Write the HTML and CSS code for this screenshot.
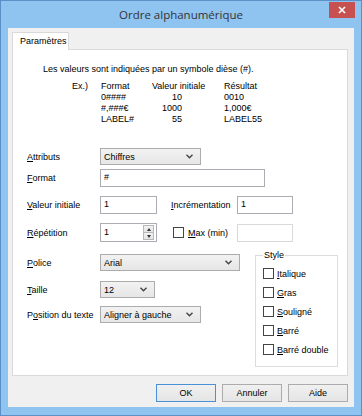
FILE: index.html
```html
<!DOCTYPE html>
<html lang="fr">
<head>
  <meta charset="UTF-8" />
  <title>Ordre alphanumérique</title>
  <link rel="stylesheet" href="styles.css">
</head>
<body>
  <div class="window">
    <div class="titlebar">
      <span class="title">Ordre alphanumérique</span>
      <button class="close" aria-label="Fermer">
        <svg width="8" height="8" viewBox="0 0 8 8"><path d="M1 1 L7 7 M7 1 L1 7" stroke="#fff" stroke-width="1.7"/></svg>
      </button>
    </div>

    <div class="client">
      <div class="tabs">
        <div class="tab">Paramètres</div>
      </div>

      <div class="panel">
        <p class="intro">Les valeurs sont indiquées par un symbole dièse (#).</p>

        <div class="examples">
          <span>Ex.)</span><span>Format</span><span>Valeur initiale</span><span>Résultat</span>
          <span></span><span>0####</span><span class="num">10</span><span>0010</span>
          <span></span><span>#,###€</span><span class="num">1000</span><span>1,000€</span>
          <span></span><span>LABEL#</span><span class="num">55</span><span>LABEL55</span>
        </div>

        <div class="row row-attr">
          <label class="lbl"><u>A</u>ttributs</label>
          <div class="combo w101"><span>Chiffres</span>
            <svg width="7" height="5" viewBox="0 0 7 5"><path d="M0.5 0.8 L3.5 3.8 L6.5 0.8" fill="none" stroke="#444" stroke-width="1.4"/></svg>
          </div>
        </div>

        <div class="row row-format">
          <label class="lbl"><u>F</u>ormat</label>
          <div class="edit w165">#</div>
        </div>

        <div class="row row-val">
          <label class="lbl"><u>V</u>aleur initiale</label>
          <div class="edit w57">1</div>
          <label class="sub"><u>I</u>ncrémentation</label>
          <div class="edit w56">1</div>
        </div>

        <div class="row row-rep">
          <label class="lbl"><u>R</u>épétition</label>
          <div class="spin">
            <span class="val">1</span>
            <span class="arrows">
              <span class="arrow"><i class="up"></i></span>
              <span class="arrow"><i class="down"></i></span>
            </span>
          </div>
          <label class="sub check-sub"><span class="box"></span><span><u>M</u>ax (min)</span></label>
          <div class="edit w56 disabled"></div>
        </div>

        <div class="lower">
          <div class="lower-left">
            <div class="row row-police">
              <label class="lbl"><u>P</u>olice</label>
              <div class="combo w140"><span>Arial</span>
                <svg width="7" height="5" viewBox="0 0 7 5"><path d="M0.5 0.8 L3.5 3.8 L6.5 0.8" fill="none" stroke="#444" stroke-width="1.4"/></svg>
              </div>
            </div>
            <div class="row row-taille">
              <label class="lbl"><u>T</u>aille</label>
              <div class="combo w55"><span>12</span>
                <svg width="7" height="5" viewBox="0 0 7 5"><path d="M0.5 0.8 L3.5 3.8 L6.5 0.8" fill="none" stroke="#444" stroke-width="1.4"/></svg>
              </div>
            </div>
            <div class="row row-pos">
              <label class="lbl">P<u>o</u>sition du texte</label>
              <div class="combo w101"><span>Aligner à gauche</span>
                <svg width="7" height="5" viewBox="0 0 7 5"><path d="M0.5 0.8 L3.5 3.8 L6.5 0.8" fill="none" stroke="#444" stroke-width="1.4"/></svg>
              </div>
            </div>
          </div>

          <fieldset class="style-box">
            <legend>Style</legend>
            <label class="check"><span class="box"></span><span><u>I</u>talique</span></label>
            <label class="check"><span class="box"></span><span><u>G</u>ras</span></label>
            <label class="check"><span class="box"></span><span><u>S</u>ouligné</span></label>
            <label class="check"><span class="box"></span><span><u>B</u>arré</span></label>
            <label class="check"><span class="box"></span><span><u>B</u>arré double</span></label>
          </fieldset>
        </div>
      </div>

      <div class="actions">
        <button class="btn default">OK</button>
        <button class="btn">Annuler</button>
        <button class="btn">Aide</button>
      </div>
    </div>
  </div>
</body>
</html>
```

FILE: styles.css
```css
* { margin: 0; padding: 0; box-sizing: border-box; }

body {
  font-family: 'Liberation Sans', Arial, sans-serif;
  font-size: 9px;
  color: #000;
  background: #fff;
}

.window {
  width: 362px;
  height: 416px;
  background-color: #8fc3f0;
  border: 1px solid #5b8fc6;
  display: flex;
  flex-direction: column;
}

/* Title bar */
.titlebar {
  height: 27px;
  display: grid;
  grid-template-columns: 1fr auto 1fr;
  align-items: start;
}

.title {
  grid-column: 2;
  font-family: 'Open Sans', sans-serif;
  font-size: 11.5px;
  line-height: 27px;
  color: #333;
}

.close {
  grid-column: 3;
  justify-self: end;
  width: 26px;
  height: 16px;
  margin: 1px 6px 0 0;
  background-color: #c75050;
  border: none;
  display: flex;
  align-items: center;
  justify-content: center;
}

/* Client area */
.client {
  flex: 1;
  margin: 0 7px 8px 7px;
  background-color: #f0f0f0;
  display: flex;
  flex-direction: column;
}

.tabs {
  display: flex;
  margin: 4px 0 0 4px;
}

.tab {
  width: 57px;
  height: 18px;
  padding-left: 7px;
  line-height: 17px;
  background-color: #fff;
  border: 1px solid #d9d9d9;
  border-bottom: none;
  margin-bottom: -1px;
  position: relative;
  z-index: 1;
}

.panel {
  height: 327px;
  margin: 0 6px 0 4px;
  padding: 14px 0 0 14px;
  background-color: #fff;
  border: 1px solid #d9d9d9;
}

.intro {
  margin-left: 16px;
  line-height: 11px;
}

.examples {
  display: grid;
  grid-template-columns: 29px 51px 72px auto;
  margin: 6px 0 0 45px;
  line-height: 11px;
}

.examples .num {
  text-align: right;
  padding-right: 42px;
}

/* Form rows */
.row {
  display: flex;
  align-items: center;
}

.lbl {
  width: 73px;
  flex-shrink: 0;
}

.row-attr { margin-top: 23px; }
.row-format { margin-top: 4px; }
.row-val { margin-top: 9px; }
.row-rep { margin-top: 9px; }

.sub {
  width: 80px;
  padding-left: 14px;
  flex-shrink: 0;
}

.check-sub {
  display: flex;
  align-items: center;
  gap: 4px;
  padding-left: 16px;
}

.edit {
  height: 18px;
  padding: 0 3px;
  line-height: 15px;
  background-color: #fff;
  border: 1px solid #abadb3;
}

.edit.disabled {
  border-color: #d9d9d9;
}

.combo {
  height: 17px;
  padding: 0 7px 0 3px;
  display: flex;
  align-items: center;
  justify-content: space-between;
  background: linear-gradient(#f2f2f2, #e6e6e6);
  border: 1px solid #acacac;
}

.w55 { width: 55px; }
.w56 { width: 56px; }
.w57 { width: 57px; }
.w101 { width: 101px; }
.w140 { width: 140px; }
.w165 { width: 165px; }

/* Spin box */
.spin {
  width: 57px;
  height: 19px;
  display: flex;
  background-color: #fff;
  border: 1px solid #abadb3;
}

.spin .val {
  flex: 1;
  padding-left: 3px;
  line-height: 16px;
}

.spin .arrows {
  width: 11px;
  margin: 1px 2px 1px 0;
  display: flex;
  flex-direction: column;
}

.arrow {
  flex: 1;
  display: flex;
  align-items: center;
  justify-content: center;
  background: linear-gradient(#f2f2f2, #e4e4e4);
  border: 1px solid #b8b8b8;
}

.arrow + .arrow { border-top: none; }

.arrow i {
  width: 0;
  height: 0;
  border-left: 2.5px solid transparent;
  border-right: 2.5px solid transparent;
}

.arrow .up { border-bottom: 3px solid #333; }
.arrow .down { border-top: 3px solid #333; }

/* Lower part: font settings + style group */
.lower {
  display: flex;
  margin-top: 8px;
}

.lower-left {
  width: 228px;
  padding-top: 4px;
}

.row-taille { margin-top: 10px; }
.row-pos { margin-top: 8px; }

.style-box {
  width: 83px;
  height: 117px;
  padding: 3px 0 0 7px;
  border: 1px solid #dcdcdc;
}

.style-box legend {
  padding: 0 1px;
  line-height: 11px;
}

.check {
  height: 19px;
  display: flex;
  align-items: center;
  gap: 3px;
}

.box {
  width: 11px;
  height: 11px;
  flex-shrink: 0;
  background-color: #fff;
  border: 1px solid #444;
}

/* Dialog buttons */
.actions {
  display: flex;
  justify-content: flex-end;
  gap: 6px;
  margin: 8px 6px 0 0;
}

.btn {
  width: 60px;
  height: 18px;
  font: inherit;
  color: #000;
  background: linear-gradient(#f0f0f0, #e5e5e5);
  border: 1px solid #acacac;
}

.btn.default {
  border-color: #4a90d9;
}
```
